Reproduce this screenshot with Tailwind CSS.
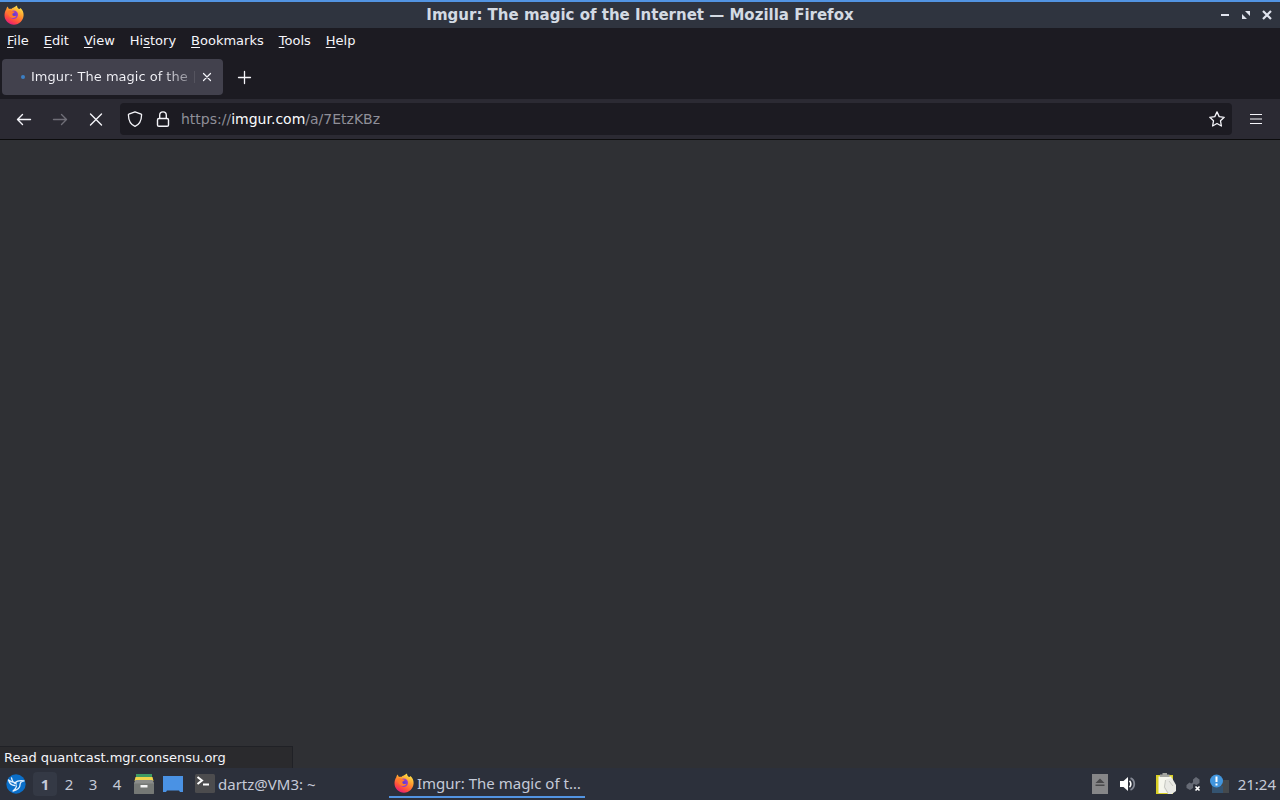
<!DOCTYPE html>
<html lang="en">
<head>
    <meta charset="UTF-8">
    <meta name="viewport" content="width=device-width, initial-scale=1.0">
    <title>Imgur: The magic of the Internet — Mozilla Firefox</title>
    <script src="https://cdn.jsdelivr.net/npm/@tailwindcss/browser@4"></script>
</head>
<body class="h-screen flex flex-col overflow-hidden bg-[#2f3034] text-[13px] text-[#f5f5fa] font-['DejaVu_Sans',sans-serif]">
    <!-- shared drawings -->
    <svg class="size-0 shrink-0" aria-hidden="true">
        <defs>
            <linearGradient id="flame" x1="0.8" y1="0" x2="0.25" y2="1">
                <stop offset="0" stop-color="#fff04d"/>
                <stop offset="0.4" stop-color="#ff9a2e"/>
                <stop offset="0.75" stop-color="#ff4a3f"/>
                <stop offset="1" stop-color="#e31587"/>
            </linearGradient>
            <radialGradient id="globe">
                <stop offset="0" stop-color="#5b3fd0"/>
                <stop offset="1" stop-color="#a13acb"/>
            </radialGradient>
            <symbol id="firefox" viewBox="0 0 20 20">
                <path fill="url(#flame)" d="M2.300 4.200C2.500 3 3.200 2 3.800 1.600c.1 1 .6 1.800 1.200 2.300.7-.2 1.400-.2 2.200 0 .8-.8 1.600-1.200 2.600-1.400 1-.8 2.100-1.500 3.200-2.100.1 1.900.9 2.800 2.100 3.700.6-.2 1-.6 1.300-1.100C18.600 4.800 19.800 7.300 19.600 10.300 19.300 15.700 15.200 19.700 10 19.700S.500 15.500.500 10.300c0-2.300.7-4.400 1.800-6.100z"/>
                <circle cx="9.800" cy="9.800" r="4.200" fill="url(#globe)"/>
                <path fill="#ff7a2b" d="M3.500 5.800c1.900-.9 3.700-.7 5 .4l2.300.5c-.2.900-1.300 1.300-2.300 1.700-.4 1-.1 2 1 2.500 1 .4 2-.1 3-.1-.8 1.800-2.700 2.600-4.600 2.100-2.800-.7-4.300-3.600-4.400-7.100z"/>
            </symbol>
        </defs>
    </svg>

    <!-- window title bar -->
    <header class="h-7 shrink-0 flex items-center border-t-2 border-[#5294e2] bg-[#2f343f] px-1">
        <div class="w-20 flex"><svg class="size-5"><use href="#firefox"/></svg></div>
        <h1 class="flex-1 text-center text-[15px] leading-5 font-bold text-[#d3dae3]">Imgur: The magic of the Internet — Mozilla Firefox</h1>
        <div class="w-20 flex justify-end gap-[9px] pr-[3px] text-[#e0e4ee]">
            <button aria-label="Minimize"><svg class="w-3 h-3" viewBox="0 0 12 12"><path d="M2 6h8" stroke="currentColor" stroke-width="2"/></svg></button>
            <button aria-label="Restore"><svg class="w-3 h-3" viewBox="0 0 12 12" fill="currentColor"><path d="M5 2h5v5zM2 5v5h5z"/></svg></button>
            <button aria-label="Close"><svg class="w-3 h-3" viewBox="0 0 12 12"><path d="M2 2l8 8M10 2l-8 8" stroke="currentColor" stroke-width="2.200"/></svg></button>
        </div>
    </header>

    <!-- menu bar -->
    <nav class="h-[26px] shrink-0 flex items-center gap-px bg-[#1c1b22]">
        <button class="px-[7px]"><u class="underline-offset-2">F</u>ile</button>
        <button class="px-[7px]"><u class="underline-offset-2">E</u>dit</button>
        <button class="px-[7px]"><u class="underline-offset-2">V</u>iew</button>
        <button class="px-[7px]">Hi<u class="underline-offset-2">s</u>tory</button>
        <button class="px-[7px]"><u class="underline-offset-2">B</u>ookmarks</button>
        <button class="px-[7px]"><u class="underline-offset-2">T</u>ools</button>
        <button class="px-[7px]"><u class="underline-offset-2">H</u>elp</button>
    </nav>

    <!-- tabs -->
    <div class="h-[45px] shrink-0 flex items-center bg-[#1c1b22] px-0.5">
        <div class="w-[221px] h-9 flex items-center rounded-sm bg-[#42414d] pl-[19px] pr-2">
            <span class="size-1 rounded-full bg-[#3b7fc4] mr-1.5"></span>
            <span class="flex-1 whitespace-nowrap bg-linear-to-r from-[#f5f5fa] from-80% to-[#7b7a85] bg-clip-text text-transparent">Imgur: The magic of the</span>
            <span class="w-px h-3 bg-[#55545f] mr-1"></span>
            <button aria-label="Close tab"><svg class="w-4 h-4" viewBox="0 0 16 16"><path d="M4.500 4.500l7 7M11.500 4.500l-7 7" stroke="currentColor" stroke-width="1.200" stroke-linecap="round"/></svg></button>
        </div>
        <button aria-label="New tab" class="ml-[13px]"><svg class="w-4 h-4" viewBox="0 0 16 16"><path d="M8.500 2.500v12M2.500 8.500h12" stroke="currentColor" stroke-width="1.300" stroke-linecap="round"/></svg></button>
    </div>

    <!-- navigation toolbar -->
    <div class="h-[41px] shrink-0 flex items-center bg-[#2b2a33] border-b border-[#0c0c0d] pl-4 pr-4">
        <div class="flex gap-5">
            <button aria-label="Back"><svg class="w-4 h-4" viewBox="0 0 16 16" fill="none" stroke="currentColor" stroke-width="1.400" stroke-linecap="round" stroke-linejoin="round"><path d="M14.500 8.500H1.500M6.500 3.500L1.500 8.500l5 5"/></svg></button>
            <button aria-label="Forward" disabled class="text-[#6f6e77]"><svg class="w-4 h-4" viewBox="0 0 16 16" fill="none" stroke="currentColor" stroke-width="1.400" stroke-linecap="round" stroke-linejoin="round"><path d="M1.500 8.500h13M9.500 3.500l5 5-5 5"/></svg></button>
            <button aria-label="Stop"><svg class="w-4 h-4" viewBox="0 0 16 16" fill="none" stroke="currentColor" stroke-width="1.400" stroke-linecap="round"><path d="M2.500 3l11 11M13.500 3l-11 11"/></svg></button>
        </div>
        <div class="flex-1 h-8 ml-4 mr-4 px-[7px] flex items-center rounded-sm bg-[#1c1b22]">
            <button aria-label="Tracking protection" class="mr-3"><svg class="w-4 h-4" viewBox="0 0 16 16" fill="none" stroke="currentColor" stroke-width="1.300" stroke-linejoin="round"><path d="M8 .8l6.200 2.300c.3 0 .4.300.4.600C14.500 9 12.500 13.500 8 15.300 3.500 13.500 1.500 9 1.400 3.700c0-.3.100-.5.400-.6z"/></svg></button>
            <button aria-label="Site information" class="mr-2.5"><svg class="w-4 h-4" viewBox="0 0 16 16" fill="none" stroke="currentColor" stroke-width="1.400"><rect x="2.500" y="7.500" width="11" height="7.800" rx="1.400"/><path d="M4.700 7.500V4.200a3.300 3.300 0 016.600 0v3.300"/></svg></button>
            <div role="textbox" aria-label="Address" contenteditable="true" class="flex-1 text-[14px] leading-5 text-[#8f8f98]">https://<span class="text-[#fbfbfe]">imgur.com</span>/a/7EtzKBz</div>
            <button aria-label="Bookmark this page"><svg class="w-4 h-4" viewBox="0 0 16 16" fill="none" stroke="currentColor" stroke-width="1.300" stroke-linejoin="round"><path d="M8 .9l2.200 4.700 5 .7-3.700 3.500.9 5.200L8 12.500l-4.400 2.500.9-5.200L.8 6.300l5-.7z"/></svg></button>
        </div>
        <button aria-label="Open application menu"><svg class="w-4 h-4" viewBox="0 0 16 16"><path d="M2 3.500h12M2 8h12M2 12.500h12" stroke="currentColor" stroke-width="1.200"/></svg></button>
    </div>

    <!-- page, still loading -->
    <main class="flex-1 flex items-end">
        <div class="w-[293px] h-[22px] flex items-center border-t border-r border-[#202126] bg-[#2a2a2d] pl-1">Read quantcast.mgr.consensu.org</div>
    </main>

    <!-- desktop panel -->
    <footer class="h-8 shrink-0 flex items-center bg-[#2c303b] text-[15px] leading-5 text-[#c5cad8] font-['Noto_Sans',sans-serif]">
        <button aria-label="Application menu" class="ml-1.5 mr-[7px]"><svg class="size-5" viewBox="0 0 20 20"><circle cx="10" cy="10" r="9.700" fill="#0b6fc9"/><path d="M2.500 6c1 3.500 3 5.500 6.500 5.500M5.500 3.800c.5 3 2 5.200 5 6.200M2.500 6c2 1.800 4.500 2.300 6.500 2.600M9.500 8.500C11 6.500 13 6.200 18 6.800c-3 .4-4 1.700-4 4.200 0 3-2.500 4.800-7 6 2-1.300 3.200-2.700 3.500-5" fill="none" stroke="#e3f1ff" stroke-width="1.300" stroke-linejoin="round" stroke-linecap="round"/></svg></button>
        <div class="flex text-center">
            <button class="w-6 h-6 rounded-sm bg-[#343945] font-bold">1</button>
            <button class="w-6 h-6">2</button>
            <button class="w-6 h-6">3</button>
            <button class="w-6 h-6">4</button>
        </div>
        <button aria-label="File manager" class="ml-[5px]"><svg class="w-5 h-5" viewBox="0 0 20 20"><path d="M2 0h16v4H2z" fill="#3f9b63"/><path d="M1.500 3h17l1 4H.5z" fill="#f1d44b"/><path d="M1.500 6h17l1.500 3v10.500H0V9z" fill="#8b8d8a"/><path d="M0 9.500h20V19a1 1 0 01-1 1H1a1 1 0 01-1-1z" fill="#757875"/><path d="M6.500 11h7v2.500h-7z" fill="#f4f4f4"/></svg></button>
        <button aria-label="Show desktop" class="ml-[9px]"><svg class="w-5 h-5" viewBox="0 0 20 20"><path d="M0 2h20v16h-3l-1-1.500H4L3 18H0z" fill="#4a92e4"/></svg></button>
        <button class="w-[194px] h-8 ml-3 flex items-center gap-[3px] text-left">
            <svg class="w-5 h-5 shrink-0" viewBox="0 0 20 20"><rect width="20" height="19" rx="1.500" fill="#4c4c4e"/><path d="M2.500 3l4.500 3.500-4.500 3.500" fill="none" stroke="#fff" stroke-width="2"/><path d="M8 10.500h6" stroke="#fff" stroke-width="2"/></svg>
            <span>dartz@VM3: ~</span>
        </button>
        <button class="w-[196px] h-7 flex items-center gap-[3px] border-b-2 border-[#5294e2] text-left pl-[5px]">
            <svg class="w-5 h-5 shrink-0"><use href="#firefox"/></svg>
            <span>Imgur: The magic of t…</span>
        </button>
        <div class="ml-auto flex items-center pr-1">
            <button aria-label="Removable media"><svg class="w-4 h-5" viewBox="0 0 16 20"><path d="M0 0h16v20H0z" fill="#868688"/><path d="M3.500 9L8 4.500 12.500 9zM3.500 10.500h9V12h-9z" fill="#48484a"/></svg></button>
            <button aria-label="Volume" class="ml-3"><svg class="w-4 h-4" viewBox="0 0 16 16"><path d="M0 5h3.500L8 1v14l-4.500-4H0z" fill="#fff"/><path d="M9.500 4.800c1.800 1.500 1.800 4.900 0 6.400" fill="none" stroke="#fff" stroke-width="1.600"/><path d="M10.500 2.200c5 2 5 9.600 0 11.600" fill="none" stroke="#858995" stroke-width="1.800"/></svg></button>
            <button aria-label="Clipboard" class="ml-5"><svg class="w-5 h-[22px]" viewBox="0 0 20 22"><path d="M0 2h17v19H0z" fill="#d9cf25"/><path d="M2.500 3.500h13V20h-13z" fill="#f6f6ed"/><path d="M4 1.500h2.500V0H11v1.500h2.500V4H4z" fill="#a4a5a0"/><path d="M10 6.500l6-1.500 4 7v6l-4 3h-4L7.500 15z" fill="#e9e9e4"/><path d="M9.500 7l-1 7 3.500 6M13 8l4 5" fill="none" stroke="#c6c7c0"/></svg></button>
            <button aria-label="Network" class="ml-2.5"><svg class="w-4 h-4" viewBox="0 0 16 16"><path d="M7 3.500L10 1l3.500 2.500V7L10.500 9 7 7.500zM.5 9l3-2.500L7 8.500v3.500l-3 2-3.500-2z" fill="#666a75"/><path d="M4 10l6-5" stroke="#666a75" stroke-width="2"/><path d="M9.500 10.500l4 4M13.500 10.500l-4 4" stroke="#fff" stroke-width="1.700"/></svg></button>
            <button aria-label="Updates" class="ml-2"><svg class="w-[19px] h-5" viewBox="0 0 19 20"><path d="M4 6h15v13H4z" fill="#45494c"/><path d="M2 12h11v7H2z" fill="#345370"/><circle cx="6.500" cy="7" r="6.500" fill="#4195dd"/><path d="M6.500 2.500v5.500M6.500 9.500v2" stroke="#fff" stroke-width="2"/></svg></button>
            <time class="ml-[9px]">21:24</time>
        </div>
    </footer>
</body>
</html>
